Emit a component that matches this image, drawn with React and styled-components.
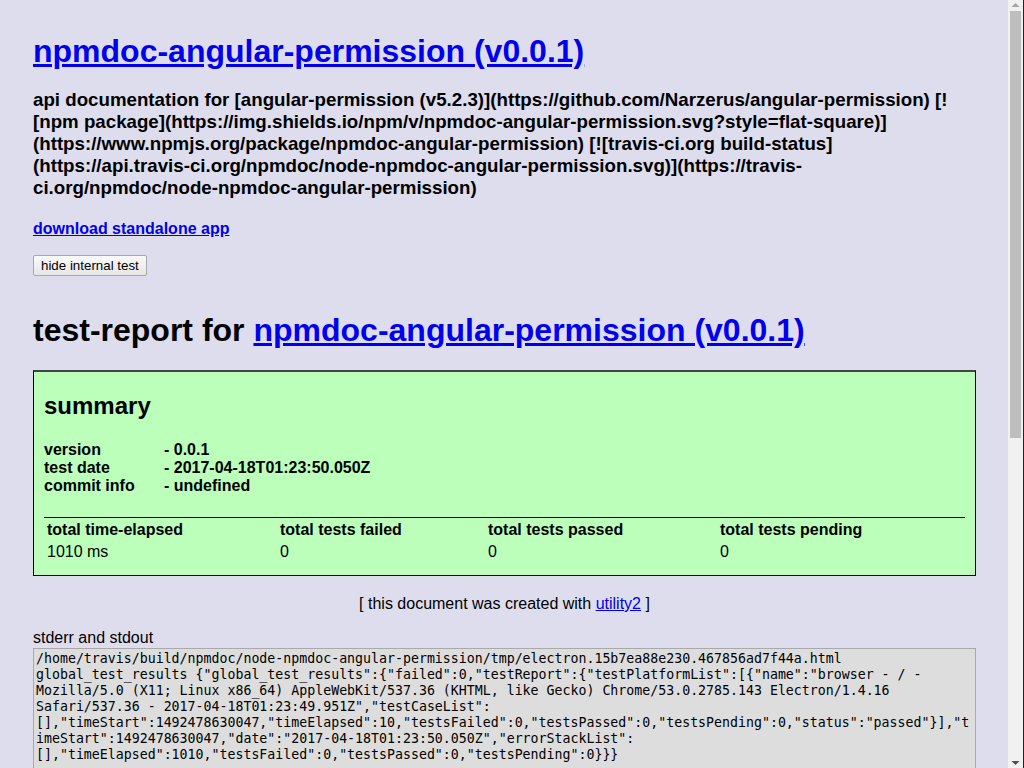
import React from 'react';
import styled, { createGlobalStyle } from 'styled-components';

const GlobalStyle = createGlobalStyle`
  html, body {
    margin: 0;
    padding: 0;
    background: #dde;
  }
  body {
    font-family: 'Liberation Sans', Arial, Helvetica, sans-serif;
    color: #000;
  }
  a {
    color: #00e;
  }
`;

const Page = styled.div`
  padding: 1px 48px 30px 33px;
`;

// browser scrollbar, drawn over the right edge
const Scrollbar = styled.div`
  position: fixed;
  top: 0;
  right: 0;
  bottom: 0;
  width: 15px;
  background: #f1f1f1;
  border-right: 1px solid #222;
  display: flex;
  flex-direction: column;
  align-items: center;
`;

const Arrow = styled.svg`
  flex: none;
  width: 15px;
  height: 11px;
  fill: ${(p) => p.color};
`;

const Track = styled.div`
  flex: 1;
  width: 100%;
  display: flex;
  flex-direction: column;
  align-items: center;
`;

const Thumb = styled.div`
  width: 11px;
  height: 427px;
  background: #bebebe;
`;

const Title = styled.h1`
  font-size: 32px;
  line-height: 37px;
  font-weight: bold;
  margin: 32px 0 0;
`;

const Description = styled.h3`
  font-size: 18.72px;
  line-height: 22px;
  font-weight: bold;
  margin: 19px 0 0;
  word-wrap: break-word;
`;

const DownloadLink = styled.h4`
  font-size: 16px;
  line-height: 18px;
  font-weight: bold;
  margin: 21px 0 0;
`;

const ToggleButton = styled.button`
  display: inline-block;
  margin-top: 17px;
  height: 21px;
  padding: 1px 7px;
  font-family: 'Liberation Sans', Arial, sans-serif;
  font-size: 13.33px;
  color: #000;
  background: linear-gradient(#fafafa, #e6e6e6);
  border: 1px solid #a9a9a9;
  border-radius: 2px;
`;

const ReportTitle = styled(Title)`
  margin-top: 36px;
`;

const SummaryBox = styled.div`
  margin-top: 21px;
  background: #bfb;
  border: 1px solid #000;
  border-top: 2px solid #444;
  padding: 0 10px 11px;
`;

const SummaryHeading = styled.h2`
  font-size: 24px;
  line-height: 28px;
  font-weight: bold;
  margin: 20px 0 0;
`;

const InfoList = styled.div`
  margin-top: 21px;
  font-size: 16px;
  line-height: 18px;
  font-weight: bold;
`;

const InfoRow = styled.div`
  display: flex;
`;

const InfoLabel = styled.span`
  width: 120px;
`;

const Totals = styled.table`
  margin-top: 22px;
  width: 100%;
  table-layout: fixed;
  border-top: 1px solid #000;
  border-spacing: 2px;
  text-align: left;
  font-size: 16px;
  line-height: 18px;
`;

const HeadCell = styled.th`
  padding: 1px;
  font-weight: bold;
  width: ${(p) => p.w || 'auto'};
`;

const Cell = styled.td`
  padding: 1px;
`;

const Footer = styled.div`
  margin-top: 19px;
  text-align: center;
  font-size: 16px;
  line-height: 18px;
`;

const OutputLabel = styled.div`
  margin-top: 16px;
  font-size: 16px;
  line-height: 18px;
`;

const Output = styled.textarea`
  display: block;
  box-sizing: border-box;
  width: 100%;
  height: 650px;
  margin: 1px 0 0;
  padding: 2px;
  border: 1px solid #a9a9a9;
  background: #ddd;
  color: #000;
  font-family: 'DejaVu Sans Mono', monospace;
  font-size: 13.25px;
  line-height: 16px;
  resize: none;
  overflow: hidden;
  word-wrap: break-word;
`;

const output = `/home/travis/build/npmdoc/node-npmdoc-angular-permission/tmp/electron.15b7ea88e230.467856ad7f44a.html
global_test_results {"global_test_results":{"failed":0,"testReport":{"testPlatformList":[{"name":"browser - / - Mozilla/5.0 (X11; Linux x86_64) AppleWebKit/537.36 (KHTML, like Gecko) Chrome/53.0.2785.143 Electron/1.4.16 Safari/537.36 - 2017-04-18T01:23:49.951Z","testCaseList":[],"timeStart":1492478630047,"timeElapsed":10,"testsFailed":0,"testsPassed":0,"testsPending":0,"status":"passed"}],"timeStart":1492478630047,"date":"2017-04-18T01:23:50.050Z","errorStackList":[],"timeElapsed":1010,"testsFailed":0,"testsPassed":0,"testsPending":0}}}
`;

const info = [
  ['version', '- 0.0.1'],
  ['test date', '- 2017-04-18T01:23:50.050Z'],
  ['commit info', '- undefined'],
];

const App = () => (
  <>
    <GlobalStyle />
    <Page>
      <Title>
        <a href="#">npmdoc-angular-permission (v0.0.1)</a>
      </Title>
      <Description>
        api documentation for [angular-permission
        (v5.2.3)](https://github.com/Narzerus/angular-permission) [![npm
        package](https://img.shields.io/npm/v/npmdoc-angular-permission.svg?style=flat-square)](https://www.npmjs.org/package/npmdoc-angular-permission)
        [![travis-ci.org
        build-status](https://api.travis-ci.org/npmdoc/node-npmdoc-angular-permission.svg)](https://travis-ci.org/npmdoc/node-npmdoc-angular-permission)
      </Description>
      <DownloadLink>
        <a href="#">download standalone app</a>
      </DownloadLink>
      <ToggleButton>hide internal test</ToggleButton>
      <ReportTitle>
        test-report for <a href="#">npmdoc-angular-permission (v0.0.1)</a>
      </ReportTitle>
      <SummaryBox>
        <SummaryHeading>summary</SummaryHeading>
        <InfoList>
          {info.map(([k, v]) => (
            <InfoRow key={k}>
              <InfoLabel>{k}</InfoLabel>
              <span>{v}</span>
            </InfoRow>
          ))}
        </InfoList>
        <Totals>
          <thead>
            <tr>
              <HeadCell w="229px">total time-elapsed</HeadCell>
              <HeadCell w="204px">total tests failed</HeadCell>
              <HeadCell w="228px">total tests passed</HeadCell>
              <HeadCell>total tests pending</HeadCell>
            </tr>
          </thead>
          <tbody>
            <tr>
              <Cell>1010 ms</Cell>
              <Cell>0</Cell>
              <Cell>0</Cell>
              <Cell>0</Cell>
            </tr>
          </tbody>
        </Totals>
      </SummaryBox>
      <Footer>
        [ this document was created with <a href="#">utility2</a> ]
      </Footer>
      <OutputLabel>stderr and stdout</OutputLabel>
      <Output readOnly value={output} />
    </Page>
    <Scrollbar>
      <Arrow color="#a3a3a3" viewBox="0 0 15 11">
        <polygon points="3.5,7 7.5,3 11.5,7" />
      </Arrow>
      <Track>
        <Thumb />
      </Track>
      <Arrow color="#505050" viewBox="0 0 15 11">
        <polygon points="3.5,4 11.5,4 7.5,8" />
      </Arrow>
    </Scrollbar>
  </>
);

export default App;
